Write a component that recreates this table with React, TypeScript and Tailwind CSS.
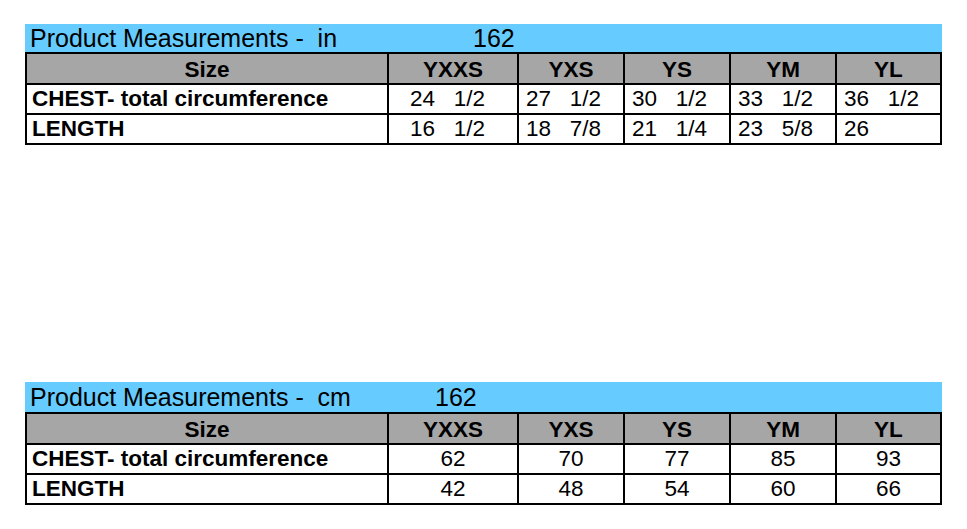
const sizes = ['YXXS', 'YXS', 'YS', 'YM', 'YL']

const inchRows = [
  { label: 'CHEST- total circumference', values: ['24   1/2', '27   1/2', '30   1/2', '33   1/2', '36   1/2'] },
  { label: 'LENGTH', values: ['16   1/2', '18   7/8', '21   1/4', '23   5/8', '26'] },
]

const cmRows = [
  { label: 'CHEST- total circumference', values: ['62', '70', '77', '85', '93'] },
  { label: 'LENGTH', values: ['42', '48', '54', '60', '66'] },
]

const grid = 'grid grid-cols-[362px_130px_106px_106px_106px_105px]'

function MeasureTable({
  unit,
  rows,
  centered,
  titleWidth,
  bandHeight,
}: {
  unit: string
  rows: { label: string; values: string[] }[]
  centered?: boolean
  titleWidth: string
  bandHeight: string
}) {
  return (
    <div className="w-[917px]">
      <div className={`flex items-center bg-[#66ccff] pl-[5px] text-[25px] leading-[28px] text-black ${bandHeight}`}>
        <span className={`whitespace-pre ${titleWidth}`}>{`Product Measurements -  ${unit}`}</span>
        <span>162</span>
      </div>
      <div className="border-l-2 border-t-2 border-black">
        <div className={`${grid} h-[31px] bg-[#a6a6a6] text-[22.5px] font-bold leading-[22px]`}>
          <div className="flex items-end justify-center border-b-2 border-r-2 border-black pb-[2px]">Size</div>
          {sizes.map((s) => (
            <div key={s} className="flex items-end justify-center border-b-2 border-r-2 border-black pb-[2px]">
              {s}
            </div>
          ))}
        </div>
        {rows.map((r) => (
          <div key={r.label} className={`${grid} h-[30px] bg-white text-[22.5px] leading-[22px]`}>
            <div className="flex items-center border-b-2 border-r-2 border-black pl-[5px] font-bold">
              {r.label}
            </div>
            {r.values.map((v, i) => (
              <div
                key={i}
                className={`flex items-center whitespace-pre border-b-2 border-r-2 border-black ${
                  centered ? 'justify-center' : i === 0 ? 'pl-[21px]' : 'pl-[7px]'
                }`}
              >
                {v}
              </div>
            ))}
          </div>
        ))}
      </div>
    </div>
  )
}

export default function App() {
  return (
    <div
      className="h-[529px] w-[967px] bg-white pl-[25px] pt-[24px] text-black"
      style={{ fontFamily: '"Liberation Sans", Arial, sans-serif' }}
    >
      <MeasureTable unit="in" rows={inchRows} titleWidth="w-[443px]" bandHeight="h-[28px]" />
      <div className="mt-[237px]">
        <MeasureTable unit="cm" rows={cmRows} centered titleWidth="w-[405px]" bandHeight="h-[30px]" />
      </div>
    </div>
  )
}
